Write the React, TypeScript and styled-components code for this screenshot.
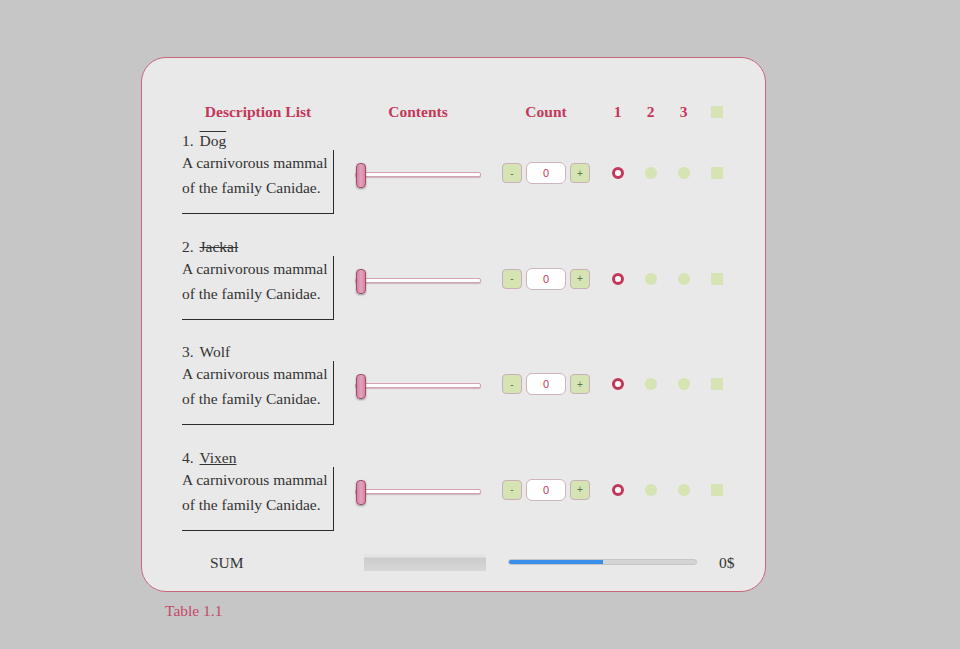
import styled, { createGlobalStyle, css } from 'styled-components';

const GlobalStyle = createGlobalStyle`
  html, body {
    margin: 0;
    background: #c6c6c6;
  }
  body {
    font-family: 'Liberation Serif', 'Times New Roman', serif;
    font-size: 15.5px;
    color: #333333;
  }
`;

const CRIMSON = '#c3385a';
const GREEN = '#d6e3b2';

const items = [
  { n: 1, name: 'Dog', deco: 'overline' },
  { n: 2, name: 'Jackal', deco: 'line-through' },
  { n: 3, name: 'Wolf', deco: 'none' },
  { n: 4, name: 'Vixen', deco: 'underline' },
];

export default function App() {
  const progress = 50;

  return (
    <>
      <GlobalStyle />
      <Page>
        <Card>
          <HeaderRow>
            <HeadCell>Description List</HeadCell>
            <HeadCell>Contents</HeadCell>
            <HeadCell>Count</HeadCell>
            <ChoiceGroup>
              <HeadCell>1</HeadCell>
              <HeadCell>2</HeadCell>
              <HeadCell>3</HeadCell>
              <Choice>
                <Square />
              </Choice>
            </ChoiceGroup>
          </HeaderRow>

          <Rows>
            {items.map((item) => (
              <ItemRow key={item.n}>
                <Description>
                  <Label>
                    {item.n}. <Name $deco={item.deco}>{item.name}</Name>
                  </Label>
                  <DescBox>
                    A carnivorous mammal
                    <br />
                    of the family Canidae.
                  </DescBox>
                </Description>
                <SliderCell>
                  <Slider type="range" min={0} max={100} defaultValue={0} />
                </SliderCell>
                <Counter>
                  <StepButton>-</StepButton>
                  <CountInput type="text" defaultValue="0" />
                  <StepButton>+</StepButton>
                </Counter>
                <ChoiceGroup>
                  <Choice>
                    <Dot $active />
                  </Choice>
                  <Choice>
                    <Dot />
                  </Choice>
                  <Choice>
                    <Dot />
                  </Choice>
                  <Choice>
                    <Square />
                  </Choice>
                </ChoiceGroup>
              </ItemRow>
            ))}
          </Rows>

          <SumRow>
            <SumLabel>SUM</SumLabel>
            <GrayBar />
            <Progress>
              <ProgressFill style={{ width: `${progress}%` }} />
            </Progress>
            <Total>0$</Total>
          </SumRow>
        </Card>
        <Caption>Table 1.1</Caption>
      </Page>
    </>
  );
}

const Page = styled.div`
  padding: 57px 0 0 141px;
`;

const Card = styled.div`
  box-sizing: border-box;
  width: 625px;
  padding: 44px 31px 19px 40px;
  background: #e9e9e9;
  border: 1px solid #c9647d;
  border-radius: 25px;
`;

const columns = css`
  display: grid;
  grid-template-columns: 152px 168px 88px auto;
  align-items: center;
`;

const HeaderRow = styled.div`
  ${columns};
  margin-bottom: 11px;
`;

const HeadCell = styled.div`
  text-align: center;
  font-weight: bold;
  line-height: 19px;
  color: ${CRIMSON};
`;

const Rows = styled.div`
  display: flex;
  flex-direction: column;
  gap: 23.67px;
`;

const ItemRow = styled.div`
  ${columns};
`;

const Description = styled.div`
  display: flex;
  flex-direction: column;
`;

const Label = styled.div`
  line-height: 18px;
`;

const Name = styled.span<{ $deco: string }>`
  margin-left: 2px;
  text-decoration: ${(p) => p.$deco};
`;

const DescBox = styled.div`
  box-sizing: border-box;
  height: 64px;
  line-height: 25px;
  padding-bottom: 13px;
  border-right: 1px solid #2b2b2b;
  border-bottom: 1px solid #2b2b2b;
  white-space: nowrap;
`;

const SliderCell = styled.div`
  display: flex;
  justify-content: center;
  padding-top: 3px;
`;

const Slider = styled.input`
  -webkit-appearance: none;
  appearance: none;
  width: 126px;
  height: 25px;
  margin: 0;
  background: transparent;

  &::-webkit-slider-runnable-track {
    height: 5px;
    background: #ffffff;
    border: 1px solid #d3a2b3;
    border-radius: 2px;
    box-shadow: 0 1px 1px rgba(150, 80, 110, 0.35);
  }

  &::-webkit-slider-thumb {
    -webkit-appearance: none;
    box-sizing: border-box;
    width: 10px;
    height: 25px;
    margin-top: -10px;
    background: linear-gradient(to right, #d683a4, #e2a3bc 50%, #d683a4);
    border: 1px solid #9e4c6b;
    border-radius: 4px;
    box-shadow: 0 1px 2px rgba(0, 0, 0, 0.35);
  }
`;

const Counter = styled.div`
  display: flex;
  align-items: center;
  gap: 4px;
`;

const StepButton = styled.button`
  box-sizing: border-box;
  width: 20px;
  height: 20px;
  padding: 0;
  background: ${GREEN};
  border: 1px solid #c9b1b9;
  border-radius: 4px;
  font-family: 'Liberation Sans', Arial, sans-serif;
  font-size: 10px;
  color: #4f7a57;
`;

const CountInput = styled.input`
  box-sizing: border-box;
  width: 40px;
  height: 22px;
  padding: 0;
  background: #ffffff;
  border: 1px solid #cfb4bd;
  border-radius: 6px;
  text-align: center;
  font-family: 'Liberation Sans', Arial, sans-serif;
  font-size: 11px;
  color: ${CRIMSON};
  outline: none;
`;

const ChoiceGroup = styled.div`
  display: grid;
  grid-template-columns: repeat(4, 33px);
  align-items: center;
  justify-items: center;
  margin-left: 11px;
`;

const Choice = styled.div`
  display: flex;
  justify-content: center;
`;

const Dot = styled.span<{ $active?: boolean }>`
  box-sizing: border-box;
  width: 12px;
  height: 12px;
  border-radius: 50%;
  background: ${(p) => (p.$active ? '#ffffff' : GREEN)};
  border: ${(p) => (p.$active ? `3px solid ${CRIMSON}` : 'none')};
`;

const Square = styled.span`
  width: 12px;
  height: 12px;
  background: ${GREEN};
`;

const SumRow = styled.div`
  display: grid;
  grid-template-columns: 160px 122px 189px auto;
  column-gap: 22px;
  align-items: center;
  margin-top: 22px;
  line-height: 19px;
`;

const SumLabel = styled.div`
  padding-left: 28px;
`;

const GrayBar = styled.div`
  height: 17px;
  background: linear-gradient(
    to bottom,
    #e4e4e4 0,
    #e4e4e4 3px,
    #cccccc 4px,
    #d7d7d7 100%
  );
`;

const Progress = styled.div`
  box-sizing: border-box;
  height: 6px;
  background: #d4d4d4;
  border: 1px solid #c6c6c6;
  border-radius: 3px;
  overflow: hidden;
`;

const ProgressFill = styled.div`
  height: 100%;
  background: #3a8de9;
`;

const Total = styled.div``;

const Caption = styled.div`
  margin: 9px 0 0 24px;
  line-height: 19px;
  color: #c44a68;
`;
